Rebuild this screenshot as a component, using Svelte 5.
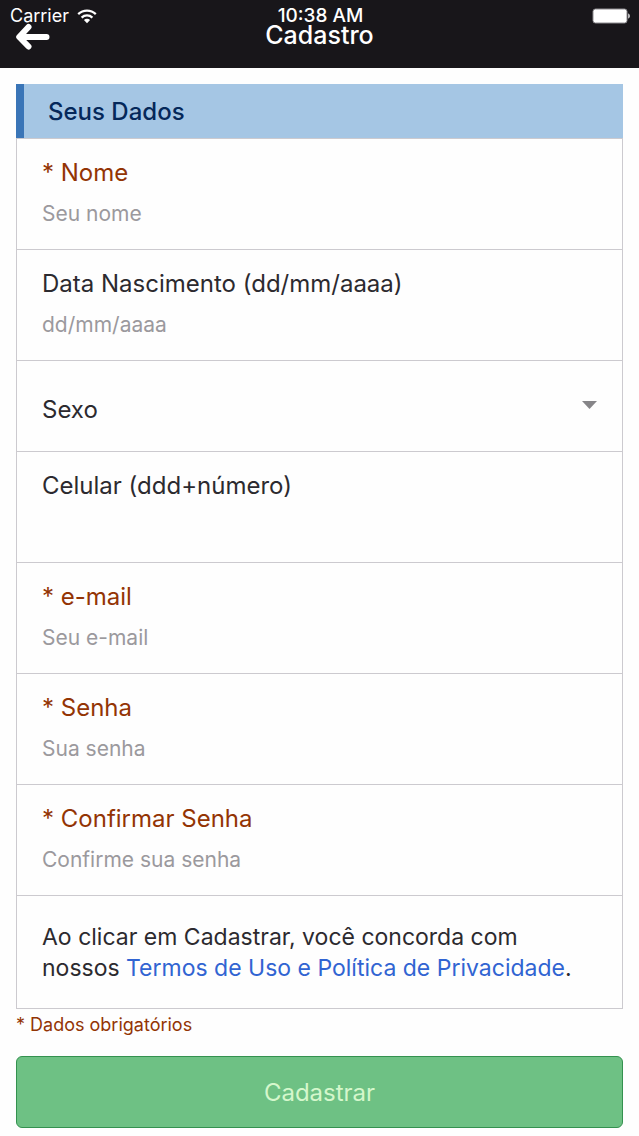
<script>
    let nome = '';
    let nascimento = '';
    let sexo = '';
    let celular = '';
    let email = '';
    let senha = '';
    let confirmacao = '';

    const handleSubmit = () => {
        if (senha !== confirmacao) {
            alert('As senhas não conferem');
        }
    };
</script>

<header>
    <div class="status">
        <div class="carrier">
            <span>Carrier</span>
            <svg width="20" height="15" viewBox="0 0 20 15" fill="none" stroke="#fff" stroke-width="2.3" aria-hidden="true">
                <path d="M1.2 5.2C6.2 .4 13.8 .4 18.8 5.2" />
                <path d="M4.6 8.6c3.1-2.9 7.7-2.9 10.8 0" />
                <path d="M10 14.2 6.9 11.1c1.7-1.7 4.5-1.7 6.2 0z" fill="#fff" stroke="none" />
            </svg>
        </div>
        <time>10:38 AM</time>
        <svg class="battery" width="39" height="16" viewBox="0 0 39 16" aria-hidden="true">
            <rect x="1" y="1" width="34" height="14" rx="2.5" fill="#fff" stroke="#8d8b8f" stroke-width="1" />
            <path d="M36.3 5.5c1.9.4 1.9 4.6 0 5z" fill="#fff" />
        </svg>
    </div>
    <button type="button" class="back" aria-label="Voltar">
        <svg width="34" height="28" viewBox="0 0 34 28" fill="none" stroke="#fff" stroke-width="6" stroke-linecap="round" stroke-linejoin="round">
            <path d="M12.5 4 3.2 14l9.3 9.5M5 14h25.5" />
        </svg>
    </button>
    <h1>Cadastro</h1>
</header>

<main>
    <form on:submit|preventDefault={handleSubmit}>
        <div class="card">
            <h2>Seus Dados</h2>
            <div class="row">
                <label class="required" for="nome">* Nome</label>
                <input type="text" id="nome" bind:value={nome} placeholder="Seu nome" required />
            </div>
            <div class="row">
                <label for="nascimento">Data Nascimento (dd/mm/aaaa)</label>
                <input type="text" id="nascimento" bind:value={nascimento} placeholder="dd/mm/aaaa" />
            </div>
            <div class="row select-row">
                <select bind:value={sexo} aria-label="Sexo">
                    <option value="">Sexo</option>
                    <option value="f">Feminino</option>
                    <option value="m">Masculino</option>
                </select>
                <svg width="15" height="8" viewBox="0 0 15 8" aria-hidden="true">
                    <path d="M0 0h15L7.5 8z" fill="#868588" />
                </svg>
            </div>
            <div class="row">
                <label for="celular">Celular (ddd+número)</label>
                <input type="tel" id="celular" bind:value={celular} />
            </div>
            <div class="row">
                <label class="required" for="email">* e-mail</label>
                <input type="email" id="email" bind:value={email} placeholder="Seu e-mail" required />
            </div>
            <div class="row">
                <label class="required" for="senha">* Senha</label>
                <input type="password" id="senha" bind:value={senha} placeholder="Sua senha" required />
            </div>
            <div class="row">
                <label class="required" for="confirmacao">* Confirmar Senha</label>
                <input type="password" id="confirmacao" bind:value={confirmacao} placeholder="Confirme sua senha" required />
            </div>
            <p class="terms">
                Ao clicar em Cadastrar, você concorda com nossos <a href="#termos">Termos de Uso e Política de Privacidade</a>.
            </p>
        </div>
        <p class="note">* Dados obrigatórios</p>
        <button type="submit" class="submit">Cadastrar</button>
    </form>
</main>

<style>
    :global(body) {
        background: #fefefe;
        color: #2c2a2f;
        font-family: Inter, "Liberation Sans", sans-serif;
    }
    h1, h2, p {
        margin: 0;
        font-weight: 400;
    }
    header {
        position: relative;
        display: grid;
        grid-template-columns: 50px 1fr 50px;
        align-items: center;
        height: 68px;
        background: #18161a;
        color: #fff;
    }
    .status {
        position: absolute;
        top: 6px;
        left: 10px;
        right: 8px;
        display: grid;
        grid-template-columns: 1fr auto 1fr;
        align-items: center;
        font-size: 18px;
        line-height: 20px;
    }
    .carrier {
        display: flex;
        align-items: center;
        gap: 8px;
    }
    time {
        font-size: 19px;
        font-weight: 500;
    }
    .battery {
        justify-self: end;
    }
    .back {
        display: flex;
        margin: 6px 0 0;
        padding: 0 0 0 16px;
        border: 0;
        background: none;
        cursor: pointer;
    }
    h1 {
        padding-top: 2px;
        font-size: 25px;
        font-weight: 500;
        line-height: 32px;
        text-align: center;
    }
    main {
        padding: 16px 16px 8px;
    }
    .card {
        border: 1px solid #cccacf;
        border-top: 0;
    }
    h2 {
        margin: 0 -1px;
        padding: 2px 24px 0;
        border-left: 8px solid #3a75b7;
        box-shadow: 0 1px #cccacf;
        background: #a5c6e4;
        color: #05285a;
        font-size: 24px;
        font-weight: 500;
        line-height: 52px;
    }
    .row {
        display: flex;
        flex-direction: column;
        gap: 9px;
        padding: 18px 25px 21px;
        border-bottom: 1px solid #cccacf;
    }
    h2 + .row {
        margin-top: 1px;
    }
    label, select {
        font-size: 24px;
        line-height: 32px;
    }
    .required, .note {
        color: #933404;
    }
    input, select {
        width: 100%;
        box-sizing: border-box;
        margin: 0;
        padding: 0;
        border: 0;
        outline: 0;
        background: none;
        color: inherit;
        font-family: inherit;
    }
    input {
        height: 30px;
        font-size: 21px;
    }
    input::placeholder {
        color: #9b999d;
        opacity: 1;
    }
    .select-row {
        position: relative;
        padding: 0;
    }
    select {
        height: 90px;
        padding: 8px 25px 0;
        appearance: none;
        cursor: pointer;
    }
    .select-row svg {
        position: absolute;
        top: 40px;
        right: 25px;
        pointer-events: none;
    }
    .terms {
        padding: 26px 25px 24px;
        font-size: 23px;
        line-height: 31px;
    }
    a {
        color: #3164d2;
        text-decoration: none;
    }
    .note {
        font-size: 18px;
        line-height: 31px;
    }
    .submit {
        display: block;
        width: 100%;
        height: 72px;
        margin-top: 16px;
        border: 1px solid #34914f;
        border-radius: 6px;
        background: #6ec184;
        color: #d5f7cc;
        font-family: inherit;
        font-size: 24px;
        cursor: pointer;
    }
</style>
